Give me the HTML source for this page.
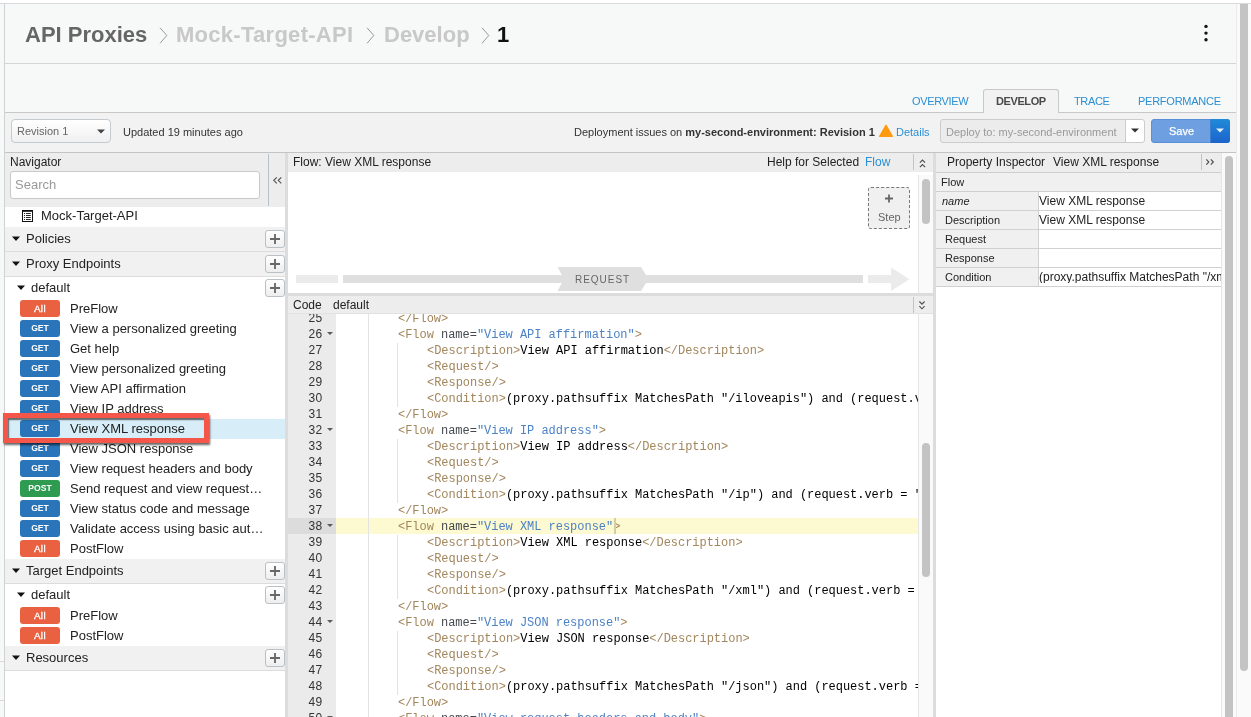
<!DOCTYPE html>
<html><head><meta charset="utf-8">
<style>
*{box-sizing:border-box;margin:0;padding:0}
html,body{width:1251px;height:717px;overflow:hidden;background:#f7f8f8;font-family:"Liberation Sans",sans-serif;color:#333}
.a{position:absolute}
.t{position:absolute;white-space:nowrap;line-height:1;will-change:transform}
.hl{position:absolute;height:1px}
.vl{position:absolute;width:1px}
</style></head><body>
<!-- top white strip + border -->
<div class="a" style="left:0;top:0;width:1251px;height:3px;background:#fff"></div>
<div class="hl" style="left:0;top:3px;width:1251px;background:#d9dadd"></div>
<div class="vl" style="left:4px;top:4px;height:713px;background:#d0d1d4"></div>
<div class="hl" style="left:0;top:661px;width:4px;background:#dadada"></div>
<div class="hl" style="left:0;top:700px;width:4px;background:#dadada"></div>

<!-- header -->
<div class="hl" style="left:5px;top:63px;width:1231px;background:#d3d4d6"></div>
<div class="t" style="left:25px;top:23.5px;font-size:22px;font-weight:bold;color:#666">API Proxies</div>
<div class="t" style="left:176px;top:23.5px;font-size:22px;font-weight:bold;color:#c8c8c8;letter-spacing:0.28px">Mock-Target-API</div>
<div class="t" style="left:384px;top:23.5px;font-size:22px;font-weight:bold;color:#c8c8c8">Develop</div>
<div class="t" style="left:497px;top:23.5px;font-size:22px;font-weight:bold;color:#111">1</div>
<svg class="a" style="left:159px;top:27px" width="10" height="18"><path d="M1 0.8 L7.8 8.5 L1 16.3" fill="none" stroke="#999" stroke-width="1"/></svg>
<svg class="a" style="left:366px;top:27px" width="10" height="18"><path d="M1 0.8 L7.8 8.5 L1 16.3" fill="none" stroke="#999" stroke-width="1"/></svg>
<svg class="a" style="left:481px;top:27px" width="10" height="18"><path d="M1 0.8 L7.8 8.5 L1 16.3" fill="none" stroke="#999" stroke-width="1"/></svg>
<!-- kebab -->
<svg class="a" style="left:1200px;top:20px" width="12" height="26"><circle cx="6" cy="6.4" r="1.7" fill="#111"/><circle cx="6" cy="13.1" r="1.7" fill="#111"/><circle cx="6" cy="19.8" r="1.7" fill="#111"/></svg>

<!-- tabs -->
<div class="hl" style="left:5px;top:112px;width:1231px;background:#c8c8c8"></div>
<div class="a" style="left:983px;top:89px;width:76px;height:24px;background:#f2f2f2;border:1px solid #c8c8c8;border-bottom:none;border-radius:3px 3px 0 0"></div>
<div class="t" style="left:912px;top:96px;font-size:11px;color:#2b8fd3;letter-spacing:-0.35px">OVERVIEW</div>
<div class="t" style="left:996px;top:96px;font-size:11px;font-weight:bold;color:#4a4a4a;letter-spacing:-0.4px">DEVELOP</div>
<div class="t" style="left:1074px;top:96px;font-size:11px;color:#2b8fd3;letter-spacing:-0.35px">TRACE</div>
<div class="t" style="left:1138px;top:96px;font-size:11px;color:#2b8fd3;letter-spacing:-0.25px">PERFORMANCE</div>

<!-- toolbar -->
<div class="a" style="left:5px;top:113px;width:1231px;height:39px;background:#f2f2f2"></div>
<div class="hl" style="left:5px;top:152px;width:1231px;background:#c4c4c4"></div>
<div class="a" style="left:11px;top:119px;width:100px;height:24px;border:1px solid #c5cace;border-radius:4px;background:linear-gradient(#fff,#f0f0f0)"></div>
<div class="t" style="left:16.5px;top:126px;font-size:11px;color:#666">Revision 1</div>
<svg class="a" style="left:96px;top:129px" width="10" height="6"><path d="M1 0.5 L9 0.5 L5 4.5Z" fill="#444"/></svg>
<div class="t" style="left:122.5px;top:127px;font-size:11px;color:#333">Updated 19 minutes ago</div>
<div class="t" style="left:574.3px;top:127px;font-size:11px;color:#333">Deployment issues on <b>my-second-environment: Revision 1</b></div>
<svg class="a" style="left:879px;top:124px" width="15" height="14"><path d="M7 1.4 L13.3 12.4 L0.7 12.4Z" fill="#fd9a10" stroke="#fd9a10" stroke-width="1.4" stroke-linejoin="round"/></svg>
<div class="t" style="left:896px;top:127px;font-size:11px;color:#2b8fd3">Details</div>
<div class="a" style="left:940px;top:119px;width:205px;height:24px;border:1px solid #ccc;border-radius:3px;background:#ececec"></div>
<div class="a" style="left:1125px;top:120px;width:19px;height:22px;border-left:1px solid #ccc;background:#fff;border-radius:0 3px 3px 0"></div>
<svg class="a" style="left:1130px;top:128px" width="10" height="6"><path d="M1 0.5 L9 0.5 L5 4.5Z" fill="#333"/></svg>
<div class="t" style="left:945.5px;top:127px;font-size:11px;color:#999">Deploy to: my-second-environment</div>
<div class="a" style="left:1151px;top:119px;width:79px;height:24px;border-radius:3px;background:#6d9fe1;border:1px solid #5a90d8"></div>
<div class="a" style="left:1210px;top:119px;width:20px;height:24px;border-radius:0 3px 3px 0;background:linear-gradient(#1f8bd8,#1c63cc);border-left:1px solid #3f7fd0"></div>
<div class="t" style="left:1168.5px;top:126px;font-size:11px;color:#fff;-webkit-text-stroke:0.25px #fff">Save</div>
<svg class="a" style="left:1215px;top:128px" width="10" height="6"><path d="M1 0.5 L9 0.5 L5 4.5Z" fill="#e6eef8"/></svg>

<!-- page scrollbar -->
<div class="a" style="left:1236px;top:4px;width:15px;height:713px;background:#fafafa;border-left:1px solid #ebebeb"></div>
<div class="a" style="left:1240px;top:4px;width:8px;height:667px;border-radius:0 0 4px 4px;background:#c4c4c4"></div>

<!-- main area -->
<div class="a" style="left:5px;top:153px;width:1231px;height:564px;background:#fff"></div>

<!-- Navigator -->
<div class="a" style="left:5px;top:153px;width:280px;height:54px;background:#ededed"></div>
<div class="t" style="left:9.8px;top:156px;font-size:12px;color:#222">Navigator</div>
<div class="a" style="left:10px;top:171px;width:250px;height:28px;border:1px solid #c9c9c9;border-radius:3px;background:#fff"></div>
<div class="t" style="left:14.6px;top:178px;font-size:13px;color:#9a9a9a">Search</div>
<div class="vl" style="left:268px;top:154px;height:52px;background:#b8c1c8"></div>
<svg class="a" style="left:272px;top:176px" width="12" height="9"><path d="M4.8 1.3L1.8 4.3L4.8 7.3M9.3 1.3L6.3 4.3L9.3 7.3" fill="none" stroke="#555" stroke-width="1.2"/></svg>
<div class="a" style="left:285px;top:153px;width:3px;height:564px;background:#dcdcdc"></div>

<svg class="a" style="left:22px;top:210px" width="11" height="12"><rect x="0.5" y="0.5" width="10" height="11" fill="#fff" stroke="#111"/><rect x="0" y="0" width="11" height="1.8" fill="#111"/><path d="M2 3.5h1M2 5.5h1M2 7.5h1M2 9.5h1" stroke="#222" stroke-width="1"/><path d="M4 3.5h4.8M4 5.5h4.8M4 7.5h4.8M4 9.5h4.8" stroke="#111" stroke-width="0.9"/></svg>
<div class="t" style="left:41px;top:209.00px;font-size:13px;color:#222;">Mock-Target-API</div>
<div class="a" style="left:5px;top:227px;width:280px;height:25px;background:#f1f1f1;border-bottom:1px solid #dcdcdc"></div>
<svg class="a" style="left:12px;top:236px" width="9" height="6"><path d="M0 0.5 L8 0.5 L4 5Z" fill="#111"/></svg>
<div class="t" style="left:26px;top:232.00px;font-size:13px;color:#222;">Policies</div>
<div class="a" style="left:265px;top:230px;width:20px;height:18px;border:1px solid #b9c0c6;border-radius:3px;background:linear-gradient(#fff,#eee)"></div>
<svg class="a" style="left:265px;top:230px" width="20" height="18"><path d="M5 9H15M10 4V14" stroke="#686868" stroke-width="1.85"/></svg>
<div class="a" style="left:5px;top:252px;width:280px;height:25px;background:#f1f1f1;border-bottom:1px solid #dcdcdc"></div>
<svg class="a" style="left:12px;top:261px" width="9" height="6"><path d="M0 0.5 L8 0.5 L4 5Z" fill="#111"/></svg>
<div class="t" style="left:26px;top:257.00px;font-size:13px;color:#222;">Proxy Endpoints</div>
<div class="a" style="left:265px;top:255px;width:20px;height:18px;border:1px solid #b9c0c6;border-radius:3px;background:linear-gradient(#fff,#eee)"></div>
<svg class="a" style="left:265px;top:255px" width="20" height="18"><path d="M5 9H15M10 4V14" stroke="#686868" stroke-width="1.85"/></svg>
<svg class="a" style="left:17px;top:285px" width="9" height="6"><path d="M0 0.5 L8 0.5 L4 5Z" fill="#111"/></svg>
<div class="t" style="left:31px;top:280.50px;font-size:13px;color:#222;">default</div>
<div class="a" style="left:265px;top:279px;width:20px;height:18px;border:1px solid #b9c0c6;border-radius:3px;background:linear-gradient(#fff,#eee)"></div>
<svg class="a" style="left:265px;top:279px" width="20" height="18"><path d="M5 9H15M10 4V14" stroke="#686868" stroke-width="1.85"/></svg>
<div class="a" style="left:20px;top:300px;width:40px;height:17px;border-radius:3px;background:#ea6142;color:#fff;text-align:center;line-height:17.6px;will-change:transform;font-size:9.8px;letter-spacing:0.45px;text-indent:0px;-webkit-text-stroke:0.3px #fff;">All</div>
<div class="t" style="left:70px;top:301.80px;font-size:13px;color:#222;">PreFlow</div>
<div class="a" style="left:20px;top:320px;width:40px;height:17px;border-radius:3px;background:#2a74b9;color:#fff;text-align:center;line-height:17.6px;will-change:transform;font-size:8.6px;font-weight:bold;">GET</div>
<div class="t" style="left:70px;top:321.80px;font-size:13px;color:#222;">View a personalized greeting</div>
<div class="a" style="left:20px;top:340px;width:40px;height:17px;border-radius:3px;background:#2a74b9;color:#fff;text-align:center;line-height:17.6px;will-change:transform;font-size:8.6px;font-weight:bold;">GET</div>
<div class="t" style="left:70px;top:341.80px;font-size:13px;color:#222;">Get help</div>
<div class="a" style="left:20px;top:360px;width:40px;height:17px;border-radius:3px;background:#2a74b9;color:#fff;text-align:center;line-height:17.6px;will-change:transform;font-size:8.6px;font-weight:bold;">GET</div>
<div class="t" style="left:70px;top:361.80px;font-size:13px;color:#222;">View personalized greeting</div>
<div class="a" style="left:20px;top:380px;width:40px;height:17px;border-radius:3px;background:#2a74b9;color:#fff;text-align:center;line-height:17.6px;will-change:transform;font-size:8.6px;font-weight:bold;">GET</div>
<div class="t" style="left:70px;top:381.80px;font-size:13px;color:#222;">View API affirmation</div>
<div class="a" style="left:20px;top:400px;width:40px;height:17px;border-radius:3px;background:#2a74b9;color:#fff;text-align:center;line-height:17.6px;will-change:transform;font-size:8.6px;font-weight:bold;">GET</div>
<div class="t" style="left:70px;top:401.80px;font-size:13px;color:#222;">View IP address</div>
<div class="a" style="left:5px;top:419px;width:280px;height:20px;background:#d7eef9"></div>
<div class="a" style="left:20px;top:420px;width:40px;height:17px;border-radius:3px;background:#2a74b9;color:#fff;text-align:center;line-height:17.6px;will-change:transform;font-size:8.6px;font-weight:bold;">GET</div>
<div class="t" style="left:70px;top:421.80px;font-size:13px;color:#222;">View XML response</div>
<div class="a" style="left:20px;top:440px;width:40px;height:17px;border-radius:3px;background:#2a74b9;color:#fff;text-align:center;line-height:17.6px;will-change:transform;font-size:8.6px;font-weight:bold;">GET</div>
<div class="t" style="left:70px;top:441.80px;font-size:13px;color:#222;">View JSON response</div>
<div class="a" style="left:20px;top:460px;width:40px;height:17px;border-radius:3px;background:#2a74b9;color:#fff;text-align:center;line-height:17.6px;will-change:transform;font-size:8.6px;font-weight:bold;">GET</div>
<div class="t" style="left:70px;top:461.80px;font-size:13px;color:#222;">View request headers and body</div>
<div class="a" style="left:20px;top:480px;width:40px;height:17px;border-radius:3px;background:#2e9b51;color:#fff;text-align:center;line-height:17.6px;will-change:transform;font-size:8.6px;font-weight:bold;">POST</div>
<div class="t" style="left:70px;top:481.80px;font-size:13px;color:#222;">Send request and view request…</div>
<div class="a" style="left:20px;top:500px;width:40px;height:17px;border-radius:3px;background:#2a74b9;color:#fff;text-align:center;line-height:17.6px;will-change:transform;font-size:8.6px;font-weight:bold;">GET</div>
<div class="t" style="left:70px;top:501.80px;font-size:13px;color:#222;">View status code and message</div>
<div class="a" style="left:20px;top:520px;width:40px;height:17px;border-radius:3px;background:#2a74b9;color:#fff;text-align:center;line-height:17.6px;will-change:transform;font-size:8.6px;font-weight:bold;">GET</div>
<div class="t" style="left:70px;top:521.80px;font-size:13px;color:#222;">Validate access using basic aut…</div>
<div class="a" style="left:20px;top:540px;width:40px;height:17px;border-radius:3px;background:#ea6142;color:#fff;text-align:center;line-height:17.6px;will-change:transform;font-size:9.8px;letter-spacing:0.45px;text-indent:0px;-webkit-text-stroke:0.3px #fff;">All</div>
<div class="t" style="left:70px;top:541.80px;font-size:13px;color:#222;">PostFlow</div>
<div class="a" style="left:5px;top:559px;width:280px;height:25px;background:#f1f1f1;border-bottom:1px solid #dcdcdc"></div>
<svg class="a" style="left:12px;top:568px" width="9" height="6"><path d="M0 0.5 L8 0.5 L4 5Z" fill="#111"/></svg>
<div class="t" style="left:26px;top:564.00px;font-size:13px;color:#222;">Target Endpoints</div>
<div class="a" style="left:265px;top:562px;width:20px;height:18px;border:1px solid #b9c0c6;border-radius:3px;background:linear-gradient(#fff,#eee)"></div>
<svg class="a" style="left:265px;top:562px" width="20" height="18"><path d="M5 9H15M10 4V14" stroke="#686868" stroke-width="1.85"/></svg>
<svg class="a" style="left:17px;top:592px" width="9" height="6"><path d="M0 0.5 L8 0.5 L4 5Z" fill="#111"/></svg>
<div class="t" style="left:31px;top:587.50px;font-size:13px;color:#222;">default</div>
<div class="a" style="left:265px;top:586px;width:20px;height:18px;border:1px solid #b9c0c6;border-radius:3px;background:linear-gradient(#fff,#eee)"></div>
<svg class="a" style="left:265px;top:586px" width="20" height="18"><path d="M5 9H15M10 4V14" stroke="#686868" stroke-width="1.85"/></svg>
<div class="a" style="left:20px;top:607px;width:40px;height:17px;border-radius:3px;background:#ea6142;color:#fff;text-align:center;line-height:17.6px;will-change:transform;font-size:9.8px;letter-spacing:0.45px;text-indent:0px;-webkit-text-stroke:0.3px #fff;">All</div>
<div class="t" style="left:70px;top:608.80px;font-size:13px;color:#222;">PreFlow</div>
<div class="a" style="left:20px;top:627px;width:40px;height:17px;border-radius:3px;background:#ea6142;color:#fff;text-align:center;line-height:17.6px;will-change:transform;font-size:9.8px;letter-spacing:0.45px;text-indent:0px;-webkit-text-stroke:0.3px #fff;">All</div>
<div class="t" style="left:70px;top:628.80px;font-size:13px;color:#222;">PostFlow</div>
<div class="a" style="left:5px;top:646px;width:280px;height:25px;background:#f1f1f1;border-bottom:1px solid #dcdcdc"></div>
<svg class="a" style="left:12px;top:655px" width="9" height="6"><path d="M0 0.5 L8 0.5 L4 5Z" fill="#111"/></svg>
<div class="t" style="left:26px;top:651.00px;font-size:13px;color:#222;">Resources</div>
<div class="a" style="left:265px;top:649px;width:20px;height:18px;border:1px solid #b9c0c6;border-radius:3px;background:linear-gradient(#fff,#eee)"></div>
<svg class="a" style="left:265px;top:649px" width="20" height="18"><path d="M5 9H15M10 4V14" stroke="#686868" stroke-width="1.85"/></svg>
<div class="a" style="left:3px;top:413px;width:206px;height:30px;border:5px solid #f4574a;box-shadow:1px 2px 2px rgba(0,0,0,0.6), inset 1px 2px 1.5px rgba(0,0,0,0.6)"></div>
<div class="a" style="left:288px;top:153px;width:645px;height:19px;background:#ededed"></div>
<div class="t" style="left:293px;top:155.84px;font-size:12px;color:#222;">Flow: View XML response</div>
<div class="t" style="left:767px;top:155.84px;font-size:12px;color:#222;">Help for Selected</div>
<div class="t" style="left:865px;top:155.84px;font-size:12px;color:#2b8fd3;">Flow</div>
<div class="vl" style="left:913px;top:154px;height:16px;background:#bcc6cc"></div>
<svg class="a" style="left:917px;top:156.8px" width="12" height="12"><path d="M2.9 5.6L5.5 3L8.1 5.6M2.9 10.2L5.5 7.6L8.1 10.2" fill="none" stroke="#505050" stroke-width="1.15"/></svg>
<div class="a" style="left:918px;top:175px;width:15px;height:118px;background:#fafafa;border-left:1px solid #e6e6e6"></div>
<div class="a" style="left:922px;top:179px;width:8px;height:45px;background:#c3c3c3;border-radius:4px"></div>
<div class="a" style="left:868px;top:187px;width:42px;height:42px;border:1px dashed #777;border-radius:3px;background:#f0f0f0"></div>
<svg class="a" style="left:883px;top:193px" width="12" height="12"><path d="M2 5.5H10M6 1.5V9.5" stroke="#666" stroke-width="1.8"/></svg>
<div class="t" style="left:877.5px;top:211.69px;font-size:11px;color:#666;">Step</div>
<div class="a" style="left:296px;top:275px;width:42px;height:8px;background:#ebebeb"></div>
<div class="a" style="left:343px;top:275px;width:520px;height:8px;background:#dfdfdf"></div>
<svg class="a" style="left:557px;top:267px" width="92" height="24"><path d="M0.5 0H84L91.5 12L84 24H0.5L7 12Z" fill="#dfdfdf"/></svg>
<div class="t" style="left:574.6px;top:274.54px;font-size:10px;color:#666;letter-spacing:0.98px;">REQUEST</div>
<svg class="a" style="left:868px;top:267px" width="43" height="25"><path d="M0 8H23V0.5L41.5 12.2L23 24V16H0Z" fill="#ebebeb"/></svg>
<div class="a" style="left:288px;top:293px;width:645px;height:3px;background:#dcdcdc"></div>
<div class="a" style="left:288px;top:296px;width:645px;height:18px;background:#ededed;border-bottom:1px solid #e2e2e2"></div>
<div class="t" style="left:293px;top:298.84px;font-size:12px;color:#222;">Code</div>
<div class="t" style="left:332.7px;top:298.84px;font-size:12px;color:#222;">default</div>
<div class="vl" style="left:913px;top:297px;height:16px;background:#bcc6cc"></div>
<svg class="a" style="left:917px;top:298px" width="12" height="14"><path d="M2.4 3.5L5 6.1L7.6 3.5M2.4 8.2L5 10.8L7.6 8.2" fill="none" stroke="#505050" stroke-width="1.15"/></svg>
<div class="a" style="left:933px;top:153px;width:3px;height:564px;background:#dcdcdc"></div>
<div class="a" style="left:288px;top:314px;width:48px;height:403px;background:#ebebeb"></div>
<div class="a" style="left:918px;top:314px;width:15px;height:403px;background:#fafafa;border-left:1px solid #e6e6e6"></div>
<div class="a" style="left:922px;top:443px;width:8px;height:134px;background:#c3c3c3;border-radius:4px"></div>
<div class="a" style="left:336px;top:518px;width:582px;height:16px;background:#fdf9d0"></div>
<div class="a" style="left:288px;top:518px;width:48px;height:16px;background:#dcdcdc"></div>
<div class="a" style="left:336px;top:314px;width:582px;height:403px;overflow:hidden">
<div class="a" style="left:32.0px;top:-3.5px;width:1px;height:16px;background:#e3e3e3"></div>
<div class="t" style="left:62.00px;top:-1.49px;font-family:'Liberation Mono',monospace;font-size:12px;letter-spacing:-0.03px"><span style="color:#a2865c">&lt;/Flow&gt;</span></div>
<div class="a" style="left:32.0px;top:12.5px;width:1px;height:16px;background:#e3e3e3"></div>
<div class="t" style="left:62.00px;top:14.51px;font-family:'Liberation Mono',monospace;font-size:12px;letter-spacing:-0.03px"><span style="color:#a2865c">&lt;Flow </span><span style="color:#44494f">name=</span><span style="color:#4c82c6">"View API affirmation"</span><span style="color:#a2865c">&gt;</span></div>
<div class="a" style="left:32.0px;top:28.5px;width:1px;height:16px;background:#e3e3e3"></div>
<div class="a" style="left:60.8px;top:28.5px;width:1px;height:16px;background:#e3e3e3"></div>
<div class="t" style="left:90.80px;top:30.51px;font-family:'Liberation Mono',monospace;font-size:12px;letter-spacing:-0.03px"><span style="color:#a2865c">&lt;Description&gt;</span><span style="color:#000">View API affirmation</span><span style="color:#a2865c">&lt;/Description&gt;</span></div>
<div class="a" style="left:32.0px;top:44.5px;width:1px;height:16px;background:#e3e3e3"></div>
<div class="a" style="left:60.8px;top:44.5px;width:1px;height:16px;background:#e3e3e3"></div>
<div class="t" style="left:90.80px;top:46.51px;font-family:'Liberation Mono',monospace;font-size:12px;letter-spacing:-0.03px"><span style="color:#a2865c">&lt;Request/&gt;</span></div>
<div class="a" style="left:32.0px;top:60.5px;width:1px;height:16px;background:#e3e3e3"></div>
<div class="a" style="left:60.8px;top:60.5px;width:1px;height:16px;background:#e3e3e3"></div>
<div class="t" style="left:90.80px;top:62.51px;font-family:'Liberation Mono',monospace;font-size:12px;letter-spacing:-0.03px"><span style="color:#a2865c">&lt;Response/&gt;</span></div>
<div class="a" style="left:32.0px;top:76.5px;width:1px;height:16px;background:#e3e3e3"></div>
<div class="a" style="left:60.8px;top:76.5px;width:1px;height:16px;background:#e3e3e3"></div>
<div class="t" style="left:90.80px;top:78.51px;font-family:'Liberation Mono',monospace;font-size:12px;letter-spacing:-0.03px"><span style="color:#a2865c">&lt;Condition&gt;</span><span style="color:#000">(proxy.pathsuffix MatchesPath "/iloveapis") and (request.verb = "GET")</span><span style="color:#a2865c">&lt;/Condition&gt;</span></div>
<div class="a" style="left:32.0px;top:92.5px;width:1px;height:16px;background:#e3e3e3"></div>
<div class="t" style="left:62.00px;top:94.51px;font-family:'Liberation Mono',monospace;font-size:12px;letter-spacing:-0.03px"><span style="color:#a2865c">&lt;/Flow&gt;</span></div>
<div class="a" style="left:32.0px;top:108.5px;width:1px;height:16px;background:#e3e3e3"></div>
<div class="t" style="left:62.00px;top:110.51px;font-family:'Liberation Mono',monospace;font-size:12px;letter-spacing:-0.03px"><span style="color:#a2865c">&lt;Flow </span><span style="color:#44494f">name=</span><span style="color:#4c82c6">"View IP address"</span><span style="color:#a2865c">&gt;</span></div>
<div class="a" style="left:32.0px;top:124.5px;width:1px;height:16px;background:#e3e3e3"></div>
<div class="a" style="left:60.8px;top:124.5px;width:1px;height:16px;background:#e3e3e3"></div>
<div class="t" style="left:90.80px;top:126.51px;font-family:'Liberation Mono',monospace;font-size:12px;letter-spacing:-0.03px"><span style="color:#a2865c">&lt;Description&gt;</span><span style="color:#000">View IP address</span><span style="color:#a2865c">&lt;/Description&gt;</span></div>
<div class="a" style="left:32.0px;top:140.5px;width:1px;height:16px;background:#e3e3e3"></div>
<div class="a" style="left:60.8px;top:140.5px;width:1px;height:16px;background:#e3e3e3"></div>
<div class="t" style="left:90.80px;top:142.51px;font-family:'Liberation Mono',monospace;font-size:12px;letter-spacing:-0.03px"><span style="color:#a2865c">&lt;Request/&gt;</span></div>
<div class="a" style="left:32.0px;top:156.5px;width:1px;height:16px;background:#e3e3e3"></div>
<div class="a" style="left:60.8px;top:156.5px;width:1px;height:16px;background:#e3e3e3"></div>
<div class="t" style="left:90.80px;top:158.51px;font-family:'Liberation Mono',monospace;font-size:12px;letter-spacing:-0.03px"><span style="color:#a2865c">&lt;Response/&gt;</span></div>
<div class="a" style="left:32.0px;top:172.5px;width:1px;height:16px;background:#e3e3e3"></div>
<div class="a" style="left:60.8px;top:172.5px;width:1px;height:16px;background:#e3e3e3"></div>
<div class="t" style="left:90.80px;top:174.51px;font-family:'Liberation Mono',monospace;font-size:12px;letter-spacing:-0.03px"><span style="color:#a2865c">&lt;Condition&gt;</span><span style="color:#000">(proxy.pathsuffix MatchesPath "/ip") and (request.verb = "GET")</span><span style="color:#a2865c">&lt;/Condition&gt;</span></div>
<div class="a" style="left:32.0px;top:188.5px;width:1px;height:16px;background:#e3e3e3"></div>
<div class="t" style="left:62.00px;top:190.51px;font-family:'Liberation Mono',monospace;font-size:12px;letter-spacing:-0.03px"><span style="color:#a2865c">&lt;/Flow&gt;</span></div>
<div class="a" style="left:32.0px;top:204.5px;width:1px;height:16px;background:#e3e3e3"></div>
<div class="t" style="left:62.00px;top:206.51px;font-family:'Liberation Mono',monospace;font-size:12px;letter-spacing:-0.03px"><span style="color:#a2865c">&lt;Flow </span><span style="color:#44494f">name=</span><span style="color:#4c82c6">"View XML response"</span><span style="color:#a2865c">&gt;</span></div>
<div class="a" style="left:32.0px;top:220.5px;width:1px;height:16px;background:#e3e3e3"></div>
<div class="a" style="left:60.8px;top:220.5px;width:1px;height:16px;background:#e3e3e3"></div>
<div class="t" style="left:90.80px;top:222.51px;font-family:'Liberation Mono',monospace;font-size:12px;letter-spacing:-0.03px"><span style="color:#a2865c">&lt;Description&gt;</span><span style="color:#000">View XML response</span><span style="color:#a2865c">&lt;/Description&gt;</span></div>
<div class="a" style="left:32.0px;top:236.5px;width:1px;height:16px;background:#e3e3e3"></div>
<div class="a" style="left:60.8px;top:236.5px;width:1px;height:16px;background:#e3e3e3"></div>
<div class="t" style="left:90.80px;top:238.51px;font-family:'Liberation Mono',monospace;font-size:12px;letter-spacing:-0.03px"><span style="color:#a2865c">&lt;Request/&gt;</span></div>
<div class="a" style="left:32.0px;top:252.5px;width:1px;height:16px;background:#e3e3e3"></div>
<div class="a" style="left:60.8px;top:252.5px;width:1px;height:16px;background:#e3e3e3"></div>
<div class="t" style="left:90.80px;top:254.51px;font-family:'Liberation Mono',monospace;font-size:12px;letter-spacing:-0.03px"><span style="color:#a2865c">&lt;Response/&gt;</span></div>
<div class="a" style="left:32.0px;top:268.5px;width:1px;height:16px;background:#e3e3e3"></div>
<div class="a" style="left:60.8px;top:268.5px;width:1px;height:16px;background:#e3e3e3"></div>
<div class="t" style="left:90.80px;top:270.51px;font-family:'Liberation Mono',monospace;font-size:12px;letter-spacing:-0.03px"><span style="color:#a2865c">&lt;Condition&gt;</span><span style="color:#000">(proxy.pathsuffix MatchesPath "/xml") and (request.verb = "GET")</span><span style="color:#a2865c">&lt;/Condition&gt;</span></div>
<div class="a" style="left:32.0px;top:284.5px;width:1px;height:16px;background:#e3e3e3"></div>
<div class="t" style="left:62.00px;top:286.51px;font-family:'Liberation Mono',monospace;font-size:12px;letter-spacing:-0.03px"><span style="color:#a2865c">&lt;/Flow&gt;</span></div>
<div class="a" style="left:32.0px;top:300.5px;width:1px;height:16px;background:#e3e3e3"></div>
<div class="t" style="left:62.00px;top:302.51px;font-family:'Liberation Mono',monospace;font-size:12px;letter-spacing:-0.03px"><span style="color:#a2865c">&lt;Flow </span><span style="color:#44494f">name=</span><span style="color:#4c82c6">"View JSON response"</span><span style="color:#a2865c">&gt;</span></div>
<div class="a" style="left:32.0px;top:316.5px;width:1px;height:16px;background:#e3e3e3"></div>
<div class="a" style="left:60.8px;top:316.5px;width:1px;height:16px;background:#e3e3e3"></div>
<div class="t" style="left:90.80px;top:318.51px;font-family:'Liberation Mono',monospace;font-size:12px;letter-spacing:-0.03px"><span style="color:#a2865c">&lt;Description&gt;</span><span style="color:#000">View JSON response</span><span style="color:#a2865c">&lt;/Description&gt;</span></div>
<div class="a" style="left:32.0px;top:332.5px;width:1px;height:16px;background:#e3e3e3"></div>
<div class="a" style="left:60.8px;top:332.5px;width:1px;height:16px;background:#e3e3e3"></div>
<div class="t" style="left:90.80px;top:334.51px;font-family:'Liberation Mono',monospace;font-size:12px;letter-spacing:-0.03px"><span style="color:#a2865c">&lt;Request/&gt;</span></div>
<div class="a" style="left:32.0px;top:348.5px;width:1px;height:16px;background:#e3e3e3"></div>
<div class="a" style="left:60.8px;top:348.5px;width:1px;height:16px;background:#e3e3e3"></div>
<div class="t" style="left:90.80px;top:350.51px;font-family:'Liberation Mono',monospace;font-size:12px;letter-spacing:-0.03px"><span style="color:#a2865c">&lt;Response/&gt;</span></div>
<div class="a" style="left:32.0px;top:364.5px;width:1px;height:16px;background:#e3e3e3"></div>
<div class="a" style="left:60.8px;top:364.5px;width:1px;height:16px;background:#e3e3e3"></div>
<div class="t" style="left:90.80px;top:366.51px;font-family:'Liberation Mono',monospace;font-size:12px;letter-spacing:-0.03px"><span style="color:#a2865c">&lt;Condition&gt;</span><span style="color:#000">(proxy.pathsuffix MatchesPath "/json") and (request.verb = "GET")</span><span style="color:#a2865c">&lt;/Condition&gt;</span></div>
<div class="a" style="left:32.0px;top:380.5px;width:1px;height:16px;background:#e3e3e3"></div>
<div class="t" style="left:62.00px;top:382.51px;font-family:'Liberation Mono',monospace;font-size:12px;letter-spacing:-0.03px"><span style="color:#a2865c">&lt;/Flow&gt;</span></div>
<div class="a" style="left:32.0px;top:396.5px;width:1px;height:16px;background:#e3e3e3"></div>
<div class="t" style="left:62.00px;top:398.51px;font-family:'Liberation Mono',monospace;font-size:12px;letter-spacing:-0.03px"><span style="color:#a2865c">&lt;Flow </span><span style="color:#44494f">name=</span><span style="color:#4c82c6">"View request headers and body"</span><span style="color:#a2865c">&gt;</span></div>
</div>
<div class="a" style="left:614px;top:518px;width:2px;height:16px;background:#d2cfa6"></div>
<div class="a" style="left:288px;top:314px;width:48px;height:403px;overflow:hidden">
<div class="t" style="left:0px;top:-1.66px;width:34.5px;text-align:right;font-size:12px;color:#333;letter-spacing:0.3px">25</div>
<div class="t" style="left:0px;top:14.34px;width:34.5px;text-align:right;font-size:12px;color:#333;letter-spacing:0.3px">26</div>
<svg class="a" style="left:39px;top:17.7px" width="6" height="4"><path d="M0 0H6L3 3Z" fill="#5a5a5a"/></svg>
<div class="t" style="left:0px;top:30.34px;width:34.5px;text-align:right;font-size:12px;color:#333;letter-spacing:0.3px">27</div>
<div class="t" style="left:0px;top:46.34px;width:34.5px;text-align:right;font-size:12px;color:#333;letter-spacing:0.3px">28</div>
<div class="t" style="left:0px;top:62.34px;width:34.5px;text-align:right;font-size:12px;color:#333;letter-spacing:0.3px">29</div>
<div class="t" style="left:0px;top:78.34px;width:34.5px;text-align:right;font-size:12px;color:#333;letter-spacing:0.3px">30</div>
<div class="t" style="left:0px;top:94.34px;width:34.5px;text-align:right;font-size:12px;color:#333;letter-spacing:0.3px">31</div>
<div class="t" style="left:0px;top:110.34px;width:34.5px;text-align:right;font-size:12px;color:#333;letter-spacing:0.3px">32</div>
<svg class="a" style="left:39px;top:113.7px" width="6" height="4"><path d="M0 0H6L3 3Z" fill="#5a5a5a"/></svg>
<div class="t" style="left:0px;top:126.34px;width:34.5px;text-align:right;font-size:12px;color:#333;letter-spacing:0.3px">33</div>
<div class="t" style="left:0px;top:142.34px;width:34.5px;text-align:right;font-size:12px;color:#333;letter-spacing:0.3px">34</div>
<div class="t" style="left:0px;top:158.34px;width:34.5px;text-align:right;font-size:12px;color:#333;letter-spacing:0.3px">35</div>
<div class="t" style="left:0px;top:174.34px;width:34.5px;text-align:right;font-size:12px;color:#333;letter-spacing:0.3px">36</div>
<div class="t" style="left:0px;top:190.34px;width:34.5px;text-align:right;font-size:12px;color:#333;letter-spacing:0.3px">37</div>
<div class="t" style="left:0px;top:206.34px;width:34.5px;text-align:right;font-size:12px;color:#333;letter-spacing:0.3px">38</div>
<svg class="a" style="left:39px;top:209.7px" width="6" height="4"><path d="M0 0H6L3 3Z" fill="#5a5a5a"/></svg>
<div class="t" style="left:0px;top:222.34px;width:34.5px;text-align:right;font-size:12px;color:#333;letter-spacing:0.3px">39</div>
<div class="t" style="left:0px;top:238.34px;width:34.5px;text-align:right;font-size:12px;color:#333;letter-spacing:0.3px">40</div>
<div class="t" style="left:0px;top:254.34px;width:34.5px;text-align:right;font-size:12px;color:#333;letter-spacing:0.3px">41</div>
<div class="t" style="left:0px;top:270.34px;width:34.5px;text-align:right;font-size:12px;color:#333;letter-spacing:0.3px">42</div>
<div class="t" style="left:0px;top:286.34px;width:34.5px;text-align:right;font-size:12px;color:#333;letter-spacing:0.3px">43</div>
<div class="t" style="left:0px;top:302.34px;width:34.5px;text-align:right;font-size:12px;color:#333;letter-spacing:0.3px">44</div>
<svg class="a" style="left:39px;top:305.7px" width="6" height="4"><path d="M0 0H6L3 3Z" fill="#5a5a5a"/></svg>
<div class="t" style="left:0px;top:318.34px;width:34.5px;text-align:right;font-size:12px;color:#333;letter-spacing:0.3px">45</div>
<div class="t" style="left:0px;top:334.34px;width:34.5px;text-align:right;font-size:12px;color:#333;letter-spacing:0.3px">46</div>
<div class="t" style="left:0px;top:350.34px;width:34.5px;text-align:right;font-size:12px;color:#333;letter-spacing:0.3px">47</div>
<div class="t" style="left:0px;top:366.34px;width:34.5px;text-align:right;font-size:12px;color:#333;letter-spacing:0.3px">48</div>
<div class="t" style="left:0px;top:382.34px;width:34.5px;text-align:right;font-size:12px;color:#333;letter-spacing:0.3px">49</div>
<div class="t" style="left:0px;top:398.34px;width:34.5px;text-align:right;font-size:12px;color:#333;letter-spacing:0.3px">50</div>
<svg class="a" style="left:39px;top:401.7px" width="6" height="4"><path d="M0 0H6L3 3Z" fill="#5a5a5a"/></svg>
</div>
<div class="a" style="left:936px;top:153px;width:285px;height:19px;background:#ededed"></div>
<div class="t" style="left:946.5px;top:156.14px;font-size:12px;color:#222;">Property Inspector</div>
<div class="t" style="left:1053px;top:156.14px;font-size:12px;color:#222;">View XML response</div>
<div class="vl" style="left:1201px;top:154px;height:16px;background:#bcc6cc"></div>
<svg class="a" style="left:1204px;top:156px" width="12" height="12"><path d="M2.3 3.4L4.8 6L2.3 8.6M6.8 3.4L9.3 6L6.8 8.6" fill="none" stroke="#505050" stroke-width="1.2"/></svg>
<div class="a" style="left:936px;top:172px;width:285px;height:20px;background:#f0f0f0;border-bottom:1px solid #cfcfcf;border-top:1px solid #cfcfcf"></div>
<div class="t" style="left:941.3px;top:176.89px;font-size:11px;color:#222;">Flow</div>
<div class="a" style="left:936px;top:192px;width:102px;height:19px;background:#f0f0f0;border-bottom:1px solid #d0d0d0"></div>
<div class="a" style="left:1038px;top:192px;width:183px;height:19px;background:#fff;border-bottom:1px solid #d0d0d0;border-left:1px solid #d0d0d0"></div>
<div class="t" style="left:942px;top:195.89px;font-size:11px;color:#222;font-style:italic;">name</div>
<div class="t" style="left:1039px;top:195.24px;width:182px;overflow:hidden;font-size:12px;color:#222">View XML response</div>
<div class="a" style="left:936px;top:211px;width:102px;height:19px;background:#f0f0f0;border-bottom:1px solid #d0d0d0"></div>
<div class="a" style="left:1038px;top:211px;width:183px;height:19px;background:#fff;border-bottom:1px solid #d0d0d0;border-left:1px solid #d0d0d0"></div>
<div class="t" style="left:945px;top:214.89px;font-size:11px;color:#222;">Description</div>
<div class="t" style="left:1039px;top:214.24px;width:182px;overflow:hidden;font-size:12px;color:#222">View XML response</div>
<div class="a" style="left:936px;top:230px;width:102px;height:19px;background:#f0f0f0;border-bottom:1px solid #d0d0d0"></div>
<div class="a" style="left:1038px;top:230px;width:183px;height:19px;background:#fff;border-bottom:1px solid #d0d0d0;border-left:1px solid #d0d0d0"></div>
<div class="t" style="left:945px;top:233.89px;font-size:11px;color:#222;">Request</div>
<div class="a" style="left:936px;top:249px;width:102px;height:19px;background:#f0f0f0;border-bottom:1px solid #d0d0d0"></div>
<div class="a" style="left:1038px;top:249px;width:183px;height:19px;background:#fff;border-bottom:1px solid #d0d0d0;border-left:1px solid #d0d0d0"></div>
<div class="t" style="left:945px;top:252.89px;font-size:11px;color:#222;">Response</div>
<div class="a" style="left:936px;top:268px;width:102px;height:19px;background:#f0f0f0;border-bottom:1px solid #d0d0d0"></div>
<div class="a" style="left:1038px;top:268px;width:183px;height:19px;background:#fff;border-bottom:1px solid #d0d0d0;border-left:1px solid #d0d0d0"></div>
<div class="t" style="left:945px;top:271.89px;font-size:11px;color:#222;">Condition</div>
<div class="t" style="left:1039px;top:271.24px;width:182px;overflow:hidden;font-size:12px;color:#222">(proxy.pathsuffix MatchesPath "/xml") and (request.verb = "GET")</div>
<div class="a" style="left:1221px;top:153px;width:15px;height:564px;background:#fafafa;border-left:1px solid #e6e6e6"></div>
<div class="a" style="left:1225px;top:156px;width:8px;height:570px;background:#c3c3c3;border-radius:4px"></div>
</body></html>
